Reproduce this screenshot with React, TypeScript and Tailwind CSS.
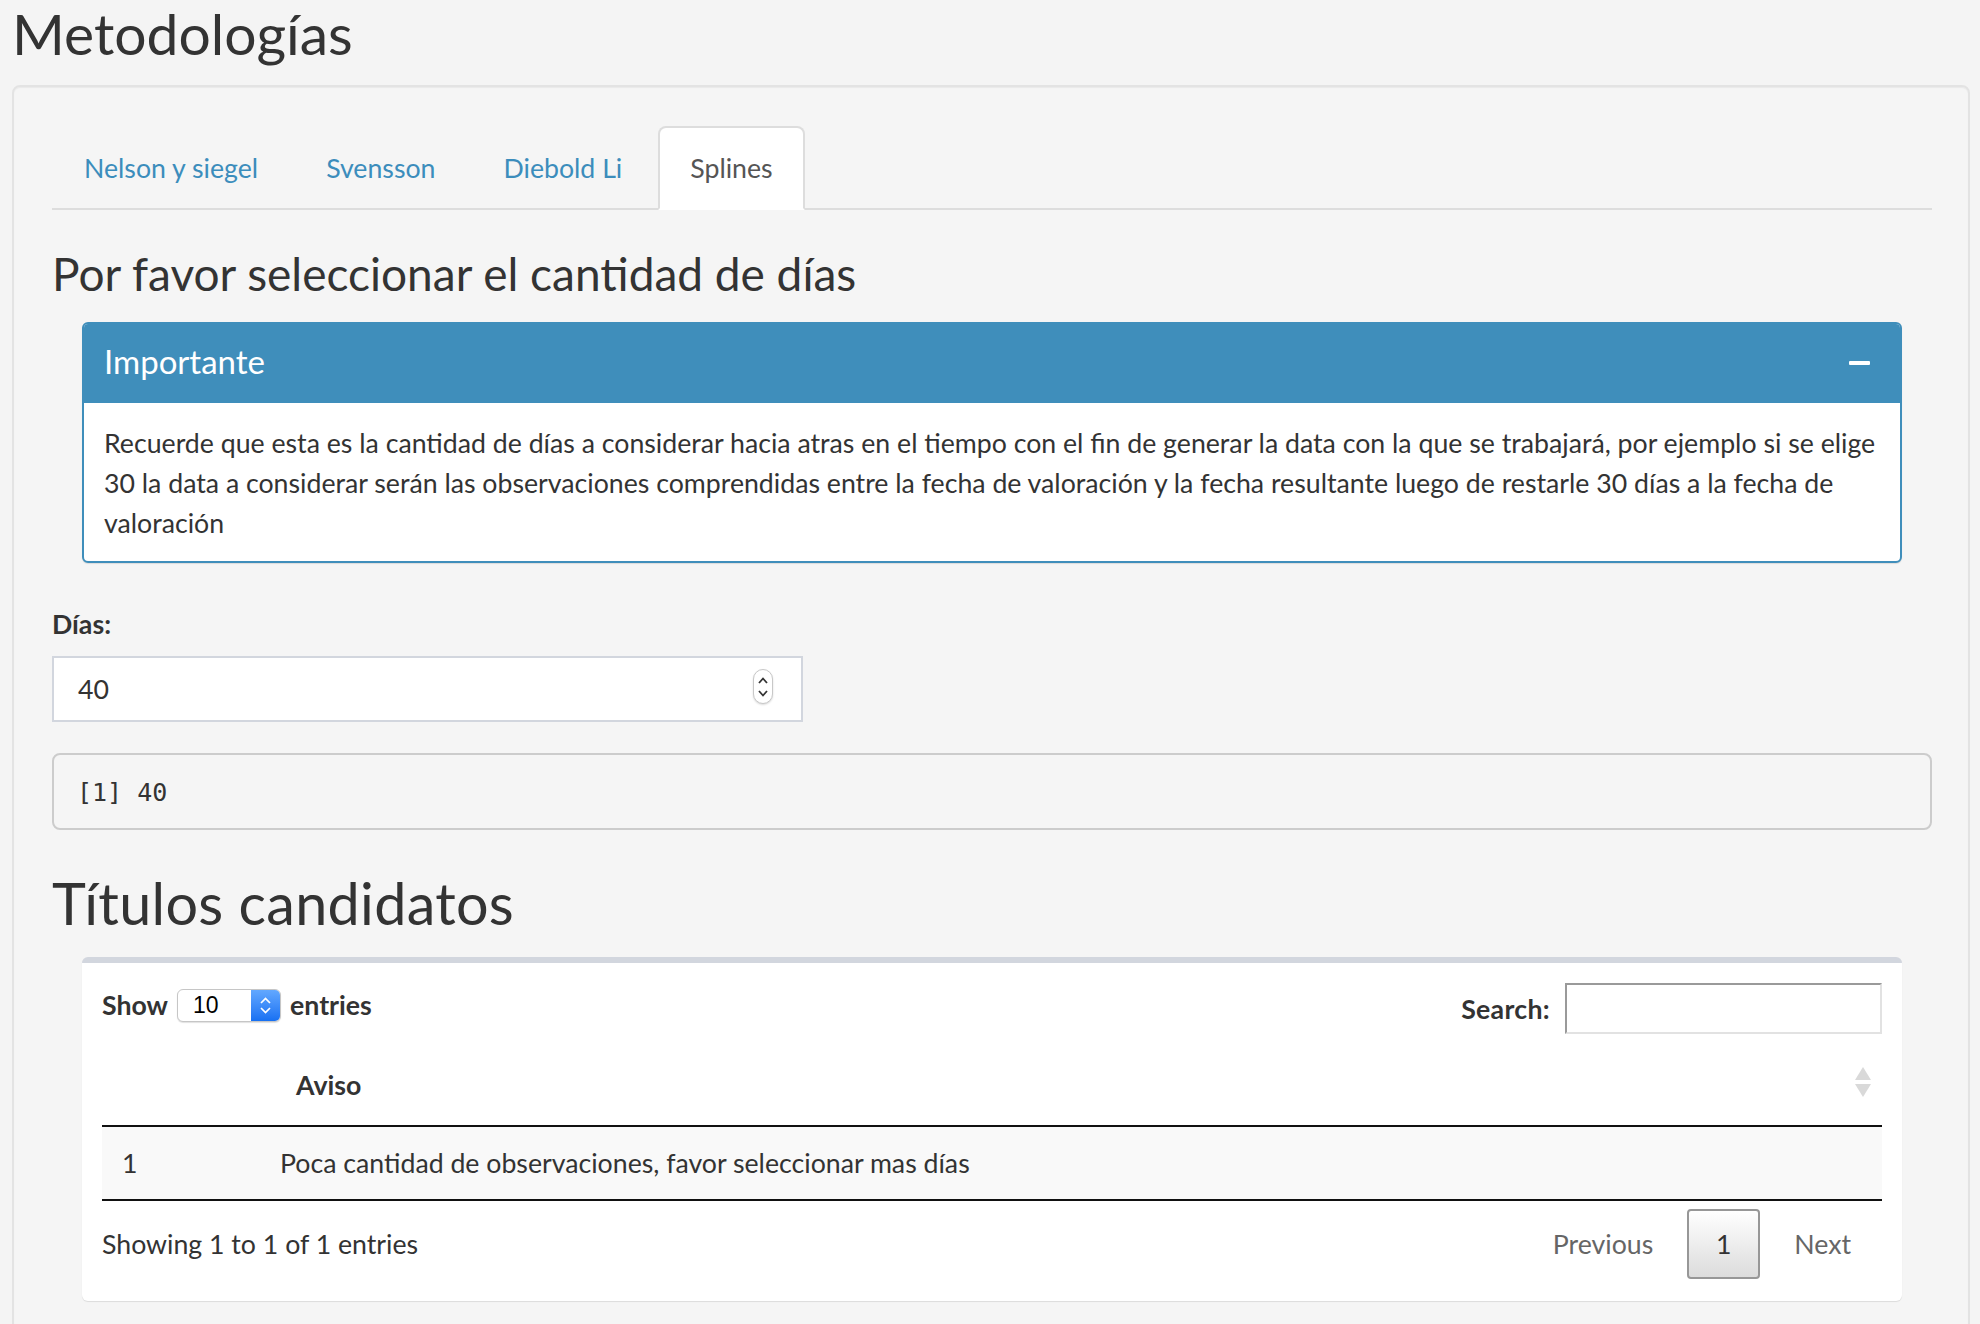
import React from "react";

function SortIcon() {
  return (
    <svg width="18" height="30" viewBox="0 0 18 30">
      <polygon points="9,0 17,13 1,13" fill="#d9d9d9" />
      <polygon points="1,17 17,17 9,30" fill="#d9d9d9" />
    </svg>
  );
}

function Spinner() {
  return (
    <div className="w-[20px] h-[35px] rounded-[10px] border border-[#c8c8c8] bg-white shadow-[0_1px_2px_rgba(0,0,0,0.15)] flex flex-col items-center justify-center gap-[6px] mb-[5px]">
      <svg width="10" height="7" viewBox="0 0 10 7">
        <polyline points="1,6 5,1.5 9,6" fill="none" stroke="#333" strokeWidth="1.8" />
      </svg>
      <svg width="10" height="7" viewBox="0 0 10 7">
        <polyline points="1,1 5,5.5 9,1" fill="none" stroke="#333" strokeWidth="1.8" />
      </svg>
    </div>
  );
}

function MacSelect() {
  return (
    <div className="mx-[9px] flex h-[33px] w-[104px] rounded-[6px] border border-[#c6c6c6] bg-white shadow-[0_1px_1px_rgba(0,0,0,0.12)] overflow-hidden font-normal">
      <div className="flex-1 flex items-center pl-[15px] font-['Liberation_Sans',Arial,sans-serif] text-[23px] text-black">
        10
      </div>
      <div className="w-[29px] bg-gradient-to-b from-[#62a8ff] to-[#1670f2] flex flex-col items-center justify-center gap-[3px]">
        <svg width="11" height="7" viewBox="0 0 11 7">
          <polyline points="1,6 5.5,1.5 10,6" fill="none" stroke="#fff" strokeWidth="1.7" />
        </svg>
        <svg width="11" height="7" viewBox="0 0 11 7">
          <polyline points="1,1 5.5,5.5 10,1" fill="none" stroke="#fff" strokeWidth="1.7" />
        </svg>
      </div>
    </div>
  );
}

export default function App() {
  const tabs = ["Nelson y siegel", "Svensson", "Diebold Li", "Splines"];
  return (
    <div className="min-h-screen bg-[#f4f4f4] text-[#333] pl-[12px] pr-[10px] font-[Lato,sans-serif]">
      <h2 className="m-0 text-[57px] leading-[66px] font-normal">Metodologías</h2>
      <div className="mt-[19px] border-2 border-[#e3e3e3] rounded-[8px] bg-[#f5f5f5] shadow-[inset_0_1px_1px_rgba(0,0,0,0.05)] pl-[38px] pr-[36px] pt-[39px] pb-[40px]">
        {/* Tabs */}
        <div className="flex border-b-2 border-[#ddd]">
          {tabs.map((t) => {
            const active = t === "Splines";
            return (
              <div
                key={t}
                className={
                  active
                    ? "mr-[4px] -mb-[2px] px-[30px] py-[20px] leading-[40px] text-[26.7px] border-2 border-[#ddd] border-b-transparent rounded-t-[8px] bg-white text-[#555]"
                    : "mr-[4px] -mb-[2px] px-[30px] py-[20px] leading-[40px] text-[26.7px] border-2 border-transparent rounded-t-[8px] text-[#3c8dbc]"
                }
              >
                {t}
              </div>
            );
          })}
        </div>

        {/* Tab content */}
        <h3 className="mt-[37px] m-0 text-[46px] leading-[53px] font-normal">
          Por favor seleccionar el cantidad de días
        </h3>

        <div className="px-[30px] mt-[22px]">
          <div className="border-2 border-[#3f8ebb] rounded-[6px] bg-white shadow-[0_1px_1px_rgba(0,0,0,0.1)] overflow-hidden">
            <div className="h-[79px] bg-[#3f8ebb] flex items-center justify-between pl-[20px] pr-[30px] pb-[5px]">
              <span className="text-[33px] leading-[40px] text-white">Importante</span>
              <div className="w-[21px] h-[4px] bg-white rounded-[1px] mt-[3px]" />
            </div>
            <div className="px-[20px] pt-[20px] pb-[18px] text-[26.7px] leading-[40px] whitespace-nowrap">
              <div>
                Recuerde que esta es la cantidad de días a considerar hacia atras en el tiempo con el fin de generar la data con la que se trabajará, por ejemplo si se elige
              </div>
              <div>
                30 la data a considerar serán las observaciones comprendidas entre la fecha de valoración y la fecha resultante luego de restarle 30 días a la fecha de
              </div>
              <div>valoración</div>
            </div>
          </div>
        </div>

        <div className="mt-[41px] text-[26.7px] leading-[40px] font-bold">Días:</div>
        <div className="mt-[12px] w-[751px] h-[66px] border-2 border-[#d2d6de] bg-white flex items-center justify-between pl-[24px] pr-[28px]">
          <span className="text-[26.7px] leading-[40px]">40</span>
          <Spinner />
        </div>

        <div className="mt-[31px] h-[77px] border-2 border-[#ccc] rounded-[8px] bg-[#f5f5f5] pl-[23px] pt-[19px] font-['DejaVu_Sans_Mono',monospace] text-[25px] leading-[37px] text-[#333] whitespace-pre">
          [1] 40
        </div>

        <h2 className="mt-[40px] m-0 text-[57.5px] leading-[66px] font-normal tracking-[0.3px]">Títulos candidatos</h2>

        <div className="px-[30px] mt-[21px]">
          <div className="border-t-[6px] border-[#d2d6de] rounded-[6px] bg-white shadow-[0_1px_1px_rgba(0,0,0,0.1)] px-[20px] pb-[22px]">
            <div className="flex justify-between items-start pt-[20px]">
              <div className="mt-[2px] flex items-center h-[40px] text-[26.7px] font-bold">
                <span>Show</span>
                <MacSelect />
                <span>entries</span>
              </div>
              <div className="flex items-center">
                <span className="text-[26.7px] leading-[40px] font-bold mr-[15px] tracking-[0.3px]">Search:</span>
                <div className="w-[317px] h-[51px] bg-white border-2 border-t-[#9a9a9a] border-l-[#9a9a9a] border-r-[#e2e2e2] border-b-[#e2e2e2]" />
              </div>
            </div>

            <div className="mt-[11px]">
              <div className="flex border-b-2 border-[#111] text-[26.7px] leading-[40px] font-bold">
                <div className="w-[158px] py-[20px]" />
                <div className="flex-1 flex items-center justify-between py-[20px] pl-[36px] pr-[10px]">
                  <span>Aviso</span>
                  <div className="mb-[6px]">
                    <SortIcon />
                  </div>
                </div>
              </div>
              <div className="flex bg-[#f9f9f9] border-b-2 border-[#111] text-[26.7px] leading-[40px]">
                <div className="w-[158px] py-[16px] pl-[20px]">1</div>
                <div className="flex-1 py-[16px] pl-[20px]">
                  Poca cantidad de observaciones, favor seleccionar mas días
                </div>
              </div>
            </div>

            <div className="flex justify-between items-center pt-[8px] text-[26.7px] leading-[40px]">
              <span>Showing 1 to 1 of 1 entries</span>
              <div className="flex items-center gap-[6px] mr-[3px]">
                <span className="px-[28px] text-[#666]">Previous</span>
                <div className="w-[73px] h-[70px] rounded-[4px] border-2 border-[#979797] bg-gradient-to-b from-white to-[#dcdcdc] flex items-center justify-center text-[#333]">
                  1
                </div>
                <span className="px-[28px] text-[#666]">Next</span>
              </div>
            </div>
          </div>
        </div>
      </div>
    </div>
  );
}
